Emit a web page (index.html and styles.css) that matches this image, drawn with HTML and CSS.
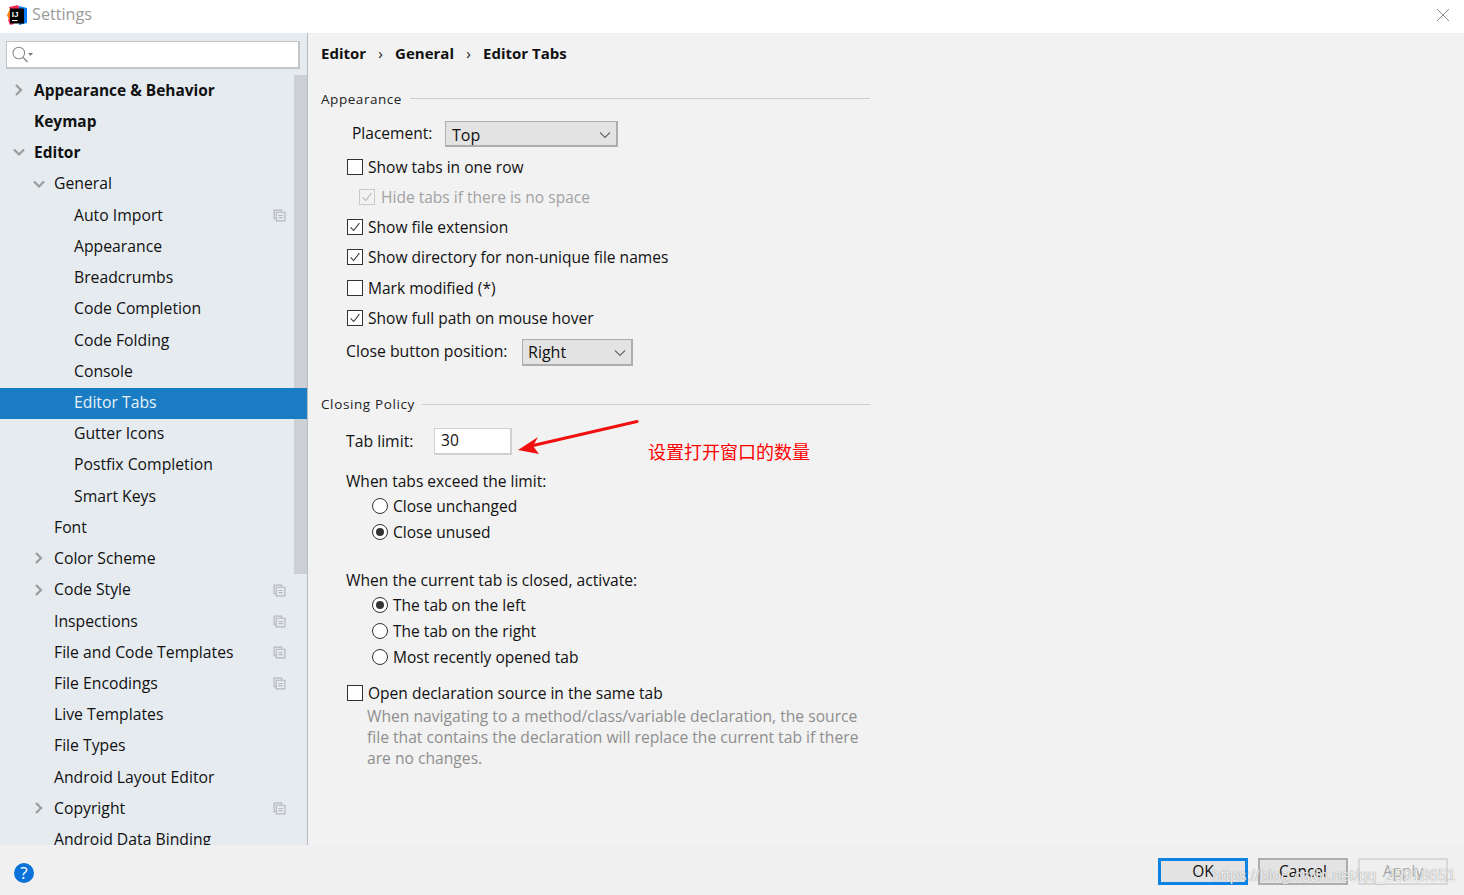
FILE: index.html
```html
<!DOCTYPE html>
<html lang="en">
<head>
<meta charset="utf-8">
<title>Settings</title>
<link rel="stylesheet" href="styles.css">
</head>
<body>
<div class="window">
  <header class="titlebar">
    <svg class="logo" width="20" height="20" viewBox="0 0 20 20">
      <path d="M0 10 3 4 4 14 2 15Z" fill="#f97a12"/>
      <path d="M1 15 4 12 7 19 3 20Z" fill="#fe315d"/>
      <path d="M2 2 11 0 13 4 3 5Z" fill="#fe2857"/>
      <path d="M12 1 20 3 20 18 12 20Z" fill="#087cfa"/>
      <rect x="3" y="3.500" width="14" height="15" fill="#000"/>
      <text x="4.800" y="11.800" class="logo-text">IJ</text>
      <rect x="5" y="15" width="5.500" height="1.100" fill="#fff"/>
    </svg>
    <span class="title">Settings</span>
    <svg class="close" width="14" height="14" viewBox="0 0 14 14"><path d="M1 1 13 13M13 1 1 13" stroke="#8a8a8a" stroke-width="1" fill="none"/></svg>
  </header>
  <div class="body">
    <aside class="sidebar">
      <div class="search">
        <svg width="22" height="18" viewBox="0 0 22 18"><circle cx="6.800" cy="7" r="5.800" fill="none" stroke="#8c8c8c" stroke-width="1.100"/><path d="M11 11.200 15.500 16" stroke="#8c8c8c" stroke-width="1.400"/><path d="M16 7h5l-2.500 3z" fill="#7f7f7f"/></svg>
      </div>
      <div class="tree-wrap">
        <div class="tree">
          <div class="row b l0"><svg class="arr" viewBox="0 0 12 12"><path d="M3 1 8 6 3 11"/></svg>Appearance &amp; Behavior</div>
          <div class="row b l0">Keymap</div>
          <div class="row b l0"><svg class="arr" viewBox="0 0 12 12"><path d="M1 3.500 6 8.500 11 3.500"/></svg>Editor</div>
          <div class="row l1"><svg class="arr" viewBox="0 0 12 12"><path d="M1 3.500 6 8.500 11 3.500"/></svg>General</div>
          <div class="row l2">Auto Import<svg class="cp" viewBox="0 0 12 12"><path d="M3 9H1V1h7v2"/><path d="M3 3h8v8H3zM5 6h4M5 8h4"/></svg></div>
          <div class="row l2">Appearance</div>
          <div class="row l2">Breadcrumbs</div>
          <div class="row l2">Code Completion</div>
          <div class="row l2">Code Folding</div>
          <div class="row l2">Console</div>
          <div class="row l2 sel">Editor Tabs</div>
          <div class="row l2">Gutter Icons</div>
          <div class="row l2">Postfix Completion</div>
          <div class="row l2">Smart Keys</div>
          <div class="row l1">Font</div>
          <div class="row l1"><svg class="arr" viewBox="0 0 12 12"><path d="M3 1 8 6 3 11"/></svg>Color Scheme</div>
          <div class="row l1"><svg class="arr" viewBox="0 0 12 12"><path d="M3 1 8 6 3 11"/></svg>Code Style<svg class="cp" viewBox="0 0 12 12"><path d="M3 9H1V1h7v2"/><path d="M3 3h8v8H3zM5 6h4M5 8h4"/></svg></div>
          <div class="row l1">Inspections<svg class="cp" viewBox="0 0 12 12"><path d="M3 9H1V1h7v2"/><path d="M3 3h8v8H3zM5 6h4M5 8h4"/></svg></div>
          <div class="row l1">File and Code Templates<svg class="cp" viewBox="0 0 12 12"><path d="M3 9H1V1h7v2"/><path d="M3 3h8v8H3zM5 6h4M5 8h4"/></svg></div>
          <div class="row l1">File Encodings<svg class="cp" viewBox="0 0 12 12"><path d="M3 9H1V1h7v2"/><path d="M3 3h8v8H3zM5 6h4M5 8h4"/></svg></div>
          <div class="row l1">Live Templates</div>
          <div class="row l1">File Types</div>
          <div class="row l1">Android Layout Editor</div>
          <div class="row l1"><svg class="arr" viewBox="0 0 12 12"><path d="M3 1 8 6 3 11"/></svg>Copyright<svg class="cp" viewBox="0 0 12 12"><path d="M3 9H1V1h7v2"/><path d="M3 3h8v8H3zM5 6h4M5 8h4"/></svg></div>
          <div class="row l1">Android Data Binding</div>
        </div>
        <div class="scrollbar"></div>
      </div>
    </aside>
    <main class="panel">
      <nav class="crumbs"><span>Editor</span><i>›</i><span>General</span><i>›</i><span>Editor Tabs</span></nav>

      <div class="group g-appearance"><span>Appearance</span><hr></div>
      <div class="field placement"><label>Placement:</label><div class="select s-top">Top<svg viewBox="0 0 12 8"><path d="M1 1.500 6 6.500 11 1.500"/></svg></div></div>
      <div class="opt c1"><span class="box"></span>Show tabs in one row</div>
      <div class="opt c2 dis"><span class="box"><svg viewBox="0 0 16 16"><path d="M3 8.500 6.500 12 13 3.500"/></svg></span>Hide tabs if there is no space</div>
      <div class="opt c3"><span class="box"><svg viewBox="0 0 16 16"><path d="M3 8.500 6.500 12 13 3.500"/></svg></span>Show file extension</div>
      <div class="opt c4"><span class="box"><svg viewBox="0 0 16 16"><path d="M3 8.500 6.500 12 13 3.500"/></svg></span>Show directory for non-unique file names</div>
      <div class="opt c5"><span class="box"></span>Mark modified (*)</div>
      <div class="opt c6"><span class="box"><svg viewBox="0 0 16 16"><path d="M3 8.500 6.500 12 13 3.500"/></svg></span>Show full path on mouse hover</div>
      <div class="field closepos"><label>Close button position:</label><div class="select s-right">Right<svg viewBox="0 0 12 8"><path d="M1 1.500 6 6.500 11 1.500"/></svg></div></div>

      <div class="group g-closing"><span>Closing Policy</span><hr></div>
      <div class="field tablimit"><label>Tab limit:</label><div class="input">30</div></div>
      <div class="line t-exceed">When tabs exceed the limit:</div>
      <div class="opt rad r1"><span class="radio"></span>Close unchanged</div>
      <div class="opt rad"><span class="radio on"></span>Close unused</div>
      <div class="line t-current">When the current tab is closed, activate:</div>
      <div class="opt rad r1"><span class="radio on"></span>The tab on the left</div>
      <div class="opt rad"><span class="radio"></span>The tab on the right</div>
      <div class="opt rad"><span class="radio"></span>Most recently opened tab</div>
      <div class="opt c7"><span class="box"></span>Open declaration source in the same tab</div>
      <p class="desc">When navigating to a method/class/variable declaration, the source file that contains the declaration will replace the current tab if there are no changes.</p>

      <svg class="arrow" width="124" height="36" viewBox="0 0 124 36"><path d="M122 2.500 18 26.500" stroke="#f01010" stroke-width="3" stroke-linecap="round"/><path d="M3 31 23 18 18 27 24 35Z" fill="#f01010"/></svg>
      <div class="note">设置打开窗口的数量</div>
    </main>
  </div>
  <footer class="footer">
    <span class="help">?</span>
    <div class="buttons">
      <button class="btn ok">OK</button>
      <button class="btn">Cancel</button>
      <button class="btn off">Apply</button>
    </div>
    <span class="wm">https://blog.csdn.net/qq_25918651</span>
  </footer>
</div>
</body>
</html>
```
FILE: styles.css
```css
* { box-sizing: border-box; }
html, body { margin: 0; padding: 0; }
body { font-family: "Open Sans", "Noto Sans", sans-serif; font-size: 15.55px; color: #111; overflow: hidden; }
.window { width: 1464px; height: 895px; display: flex; flex-direction: column; background: #f2f2f2; }

.titlebar { height: 33px; background: #fff; display: flex; align-items: center; padding: 0 14px 4px 7px; flex: none; }
.logo { flex: none; }
.logo-text { font: bold 8px "Liberation Sans", sans-serif; fill: #fff; }
.title { margin-left: 5px; color: #9a9a9a; font-size: 16.2px; margin-top: -2px; }
.close { margin-left: auto; }

.body { flex: 1; display: flex; min-height: 0; }
.sidebar { width: 308px; flex: none; background: #e6ebf0; border-right: 1px solid #b9bdc1; display: flex; flex-direction: column; overflow: hidden; }
.search { height: 28px; margin: 8px 7px 0 6px; background: #fff; border: 1px solid #c3c6c9; border-width: 1px 2px 2px 1px; padding: 4px 0 0 5px; flex: none; }
.search svg { display: block; }
.tree-wrap { flex: 1; display: flex; margin-top: 7px; min-height: 0; position: relative; }
.tree { flex: 1; min-width: 0; }
.scrollbar { position: absolute; top: -1px; right: 0; width: 13px; height: 499px; background: #ccd0d4; }
.row { height: 31.22px; display: flex; align-items: center; position: relative; white-space: nowrap; padding-bottom: 3.6px; font-size: 15.75px; }
.row.b { font-weight: 700; font-size: 15.45px; }
.l0 { padding-left: 34px; }
.l1 { padding-left: 54px; }
.l2 { padding-left: 74px; }
.row.sel { background: #1a7dc4; color: #e8f1f8; z-index: 1; }
.arr { position: absolute; width: 12px; height: 12px; top: 8px; fill: none; stroke: #9c9c9c; stroke-width: 2.2; }
.l0 .arr { left: 13px; }
.l1 .arr { left: 33px; }
.cp { position: absolute; left: 273px; top: 8px; width: 13px; height: 13px; fill: none; stroke: #b4b8bc; stroke-width: 1.1; }

.panel { flex: 1; position: relative; padding-left: 13px; min-width: 0; }
.crumbs { height: 40px; display: flex; align-items: center; font-weight: 700; font-size: 15px; }
.crumbs i { font-style: normal; font-weight: 400; margin: 0 12.25px; font-size: 15px; }
.group { display: flex; align-items: center; width: 549px; font-size: 13.5px; letter-spacing: 0.55px; color: #222; height: 20px; }
.group span { flex: none; }
.group hr { flex: 1; height: 1px; border: 0; background: #cdcdcd; margin: 0 0 2px 8px; }
.g-closing { letter-spacing: 0.62px; }
.g-closing span { margin-bottom: 2px; }
.g-closing hr { margin-left: 7px; }
.g-appearance { margin-top: 16px; }
.g-closing { margin-top: 29px; }

.field { display: flex; align-items: center; }
.placement { padding-left: 31px; margin-top: 12px; height: 26px; }
.placement label { width: 93px; margin-top: -2px; }
.closepos { padding-left: 25px; margin-top: 6px; height: 27px; }
.closepos label { width: 176px; margin-top: -4px; font-size: 15.8px; }
.tablimit { padding-left: 25px; margin-top: 13px; height: 27px; }
.tablimit label { width: 88px; font-size: 15.75px; margin-top: -2px; }
.select { height: 100%; background: #e3e3e3; border: 1px solid #adadad; border-width: 1px 2px 2px 1px; padding: 2px 0 0 6px; font-size: 16px; position: relative; }
.select svg { position: absolute; top: 9px; right: 5px; width: 12px; height: 8px; fill: none; stroke: #666; stroke-width: 1.1; }
.s-top { width: 173px; }
.s-right { width: 111px; padding: 1px 0 0 5px; }
.input { width: 78px; height: 100%; background: #fff; border: 1px solid #d0d0d0; border-width: 1px 2px 2px 1px; padding: 0 0 2px 6px; display: flex; align-items: center; }

.opt { display: flex; align-items: center; height: 30px; padding-left: 26px; white-space: nowrap; }
.c1 { margin-top: 5px; }
.c2 { padding-left: 38px; }
.c5 { margin-top: 1px; }
.c7 { margin-top: 8px; }
.dis { color: #a2a2a2; }
.box { width: 16px; height: 16px; border: 1px solid #333; background: #fff; margin-right: 5px; flex: none; display: block; }
.box svg { display: block; width: 14px; height: 14px; fill: none; stroke: #333; stroke-width: 1.2; }
.dis .box { border-color: #c9c9c9; background: #f2f2f2; margin-right: 6px; }
.dis .box svg { stroke: #b5b5b5; }

.line { padding-left: 25px; height: 26px; display: flex; align-items: center; }
.t-exceed { margin-top: 13px; }
.t-current { margin-top: 22px; font-size: 15.65px; }
.rad { padding-left: 51px; height: 26px; }
.r1 { margin-top: -1px; }
.radio { width: 16px; height: 16px; border: 1px solid #333; border-radius: 50%; background: #fff; margin-right: 5px; flex: none; display: flex; align-items: center; justify-content: center; }
.radio.on::after { content: ""; width: 8px; height: 8px; border-radius: 50%; background: #333; }
.desc { margin: -2px 0 0 46px; width: 500px; color: #8e8e8e; line-height: 21px; font-size: 15.65px; }

.arrow { position: absolute; left: 207px; top: 386px; }
.note { position: absolute; left: 340px; top: 405px; color: #f00; font: 18px/26px "Noto Sans CJK SC", sans-serif; }

.footer { height: 50px; flex: none; background: #f0f0f0; display: flex; align-items: flex-start; position: relative; }
.help { position: absolute; left: 14px; top: 18px; width: 20px; height: 20px; border-radius: 50%; background: #0a72d8; color: #fff; font-size: 17px; line-height: 20px; text-align: center; }
.buttons { margin-left: auto; margin-right: 16px; margin-top: 13px; display: flex; gap: 10px; }
.btn { width: 90px; height: 27px; background: #e3e3e3; border: 2px solid #adadad; font: 15.5px/1 "Open Sans", sans-serif; color: #111; padding: 0; }
.btn.ok { border: 3px solid #0d84e4; }
.btn.off { background: #efefef; border-color: #d8d8d8; color: #aaa; }
.wm { position: absolute; left: 1212px; top: 21px; font: 15.9px/20px "Liberation Sans", sans-serif; color: rgba(255,255,255,.85); text-shadow: 0 0 1px rgba(90,90,90,.8); white-space: nowrap; }
```
